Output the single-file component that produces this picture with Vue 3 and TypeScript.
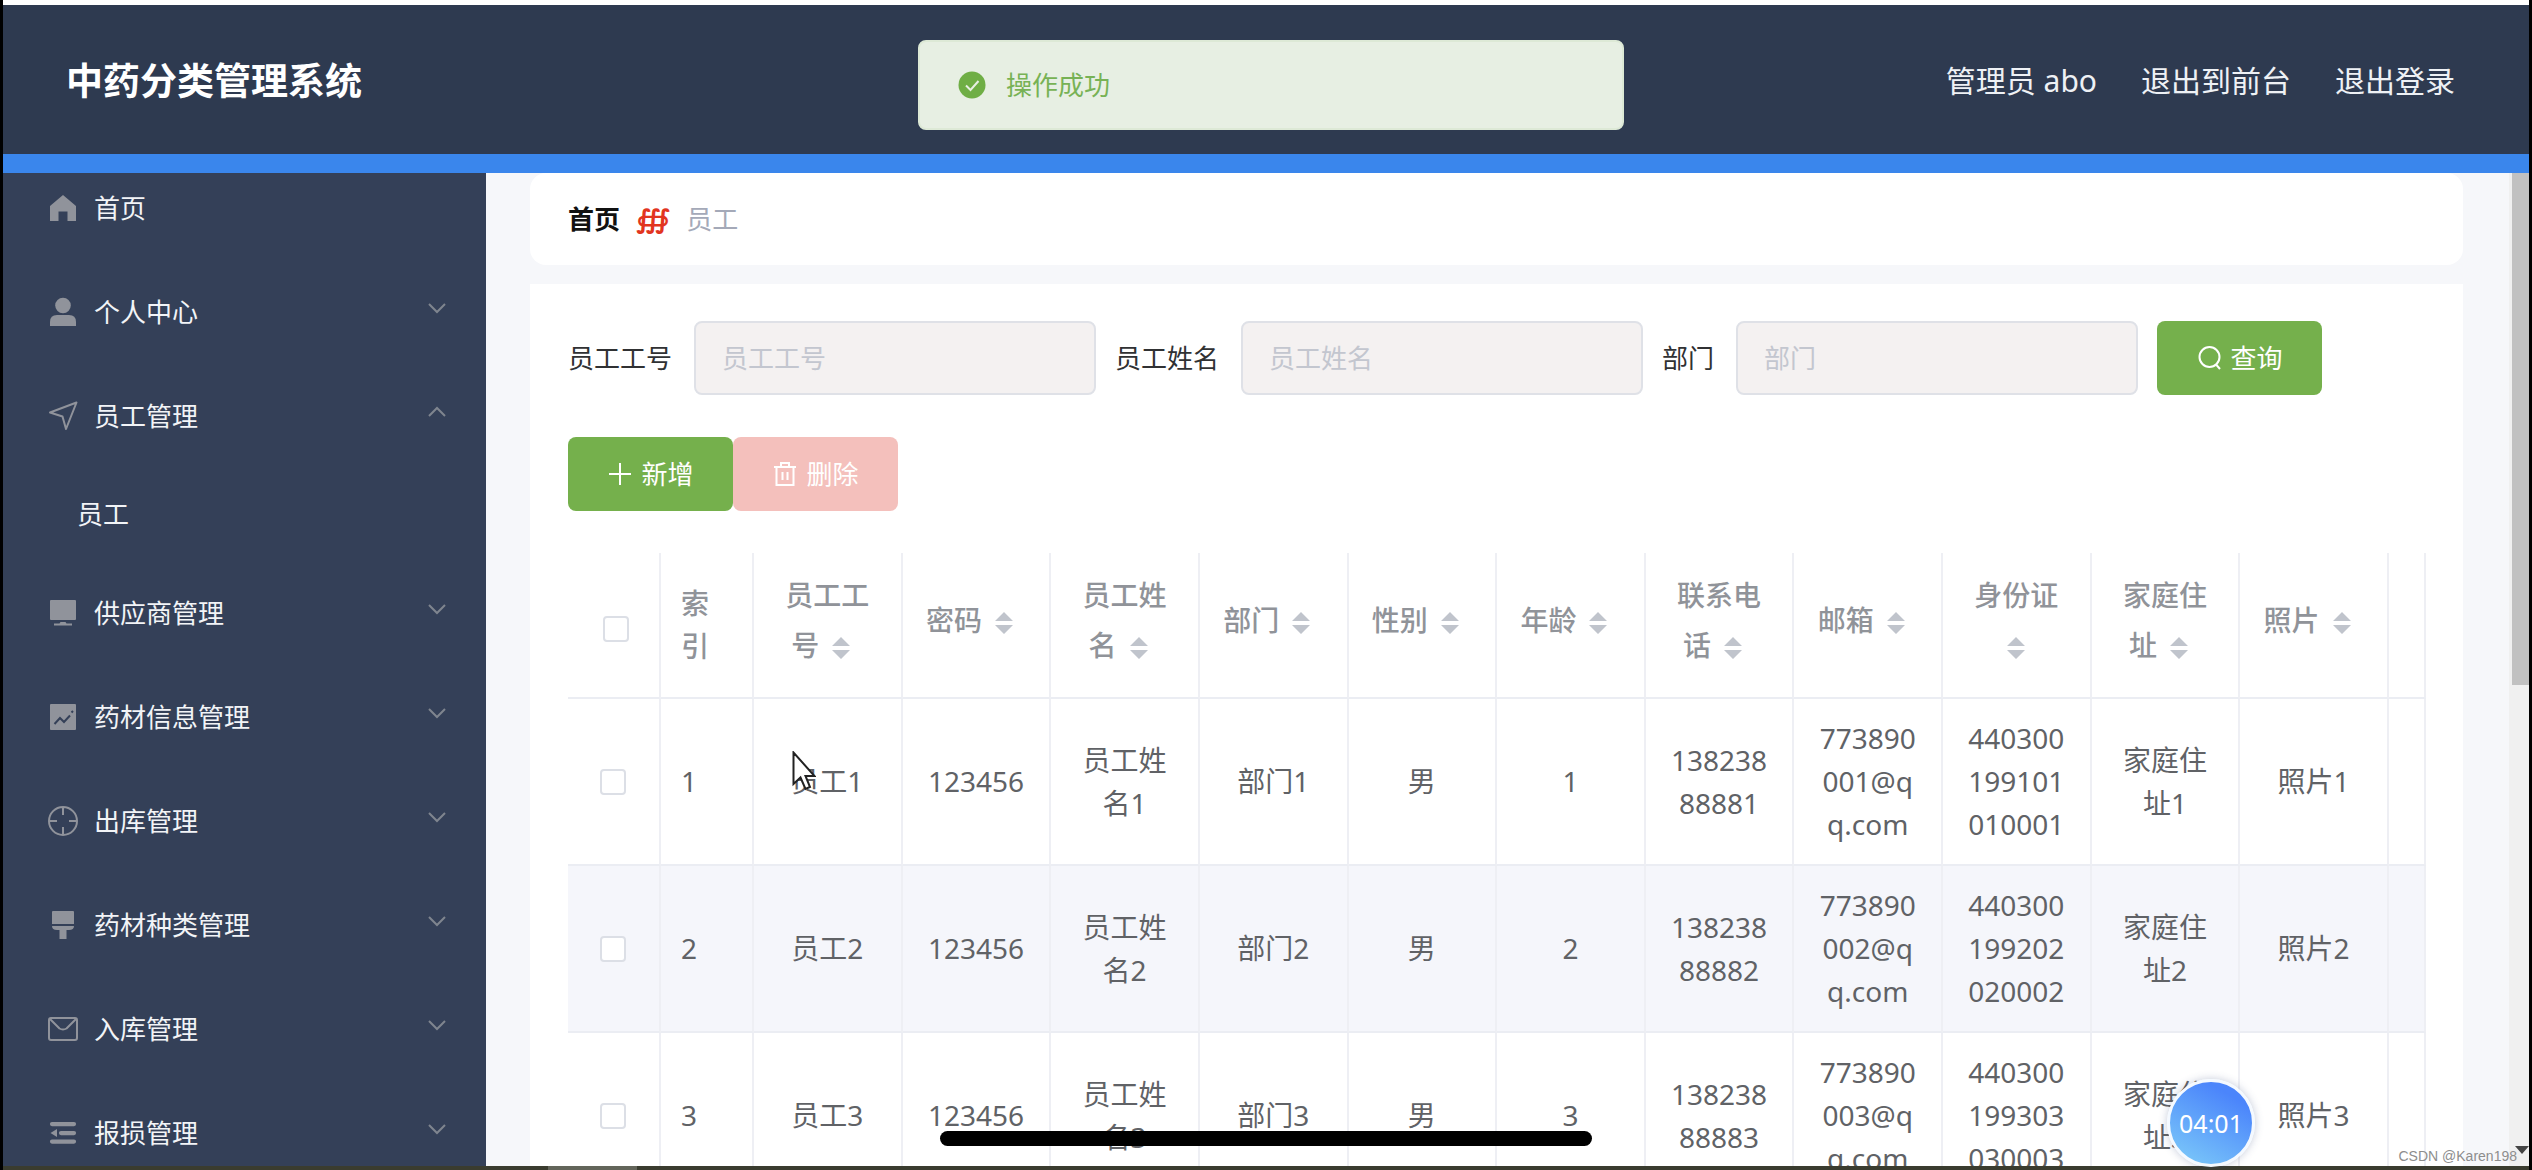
<script setup lang="ts">
interface MenuEntry {
  label: string
  icon: string
  open?: boolean
  children?: string[]
}

interface Column {
  key: string
  title: string
}

const menu: MenuEntry[] = [
  { label: '首页', icon: 'home' },
  { label: '个人中心', icon: 'user', children: [] },
  { label: '员工管理', icon: 'location', open: true, children: ['员工'] },
  { label: '供应商管理', icon: 'monitor', children: [] },
  { label: '药材信息管理', icon: 'chart', children: [] },
  { label: '出库管理', icon: 'aim', children: [] },
  { label: '药材种类管理', icon: 'brush', children: [] },
  { label: '入库管理', icon: 'message', children: [] },
  { label: '报损管理', icon: 'fold', children: [] },
]

const filters = [
  { id: 'gonghao', label: '员工工号' },
  { id: 'xingming', label: '员工姓名' },
  { id: 'bumen', label: '部门' },
]

const columns: Column[] = [
  { key: 'gonghao', title: '员工工号' },
  { key: 'mima', title: '密码' },
  { key: 'xingming', title: '员工姓名' },
  { key: 'bumen', title: '部门' },
  { key: 'xingbie', title: '性别' },
  { key: 'nianling', title: '年龄' },
  { key: 'dianhua', title: '联系电话' },
  { key: 'youxiang', title: '邮箱' },
  { key: 'shenfenzheng', title: '身份证' },
  { key: 'zhuzhi', title: '家庭住址' },
  { key: 'zhaopian', title: '照片' },
]

const idCards = ['440300199101010001', '440300199202020002', '440300199303030003']

const rows: Record<string, string>[] = idCards.map((card, i) => {
  const n = i + 1
  return {
    gonghao: `员工${n}`,
    mima: '123456',
    xingming: `员工姓名${n}`,
    bumen: `部门${n}`,
    xingbie: '男',
    nianling: `${n}`,
    dianhua: `1382388888${n}`,
    youxiang: `77389000${n}@qq.com`,
    shenfenzheng: card,
    zhuzhi: `家庭住址${n}`,
    zhaopian: `照片${n}`,
  }
})
</script>

<template>
  <div class="app">
    <header class="topbar">
      <h1>中药分类管理系统</h1>
      <nav class="account">
        <span>管理员 abo</span>
        <a href="#">退出到前台</a>
        <a href="#">退出登录</a>
      </nav>
    </header>

    <div class="body">
      <aside class="sidebar">
        <ul class="menu">
          <li v-for="item in menu" :key="item.label">
            <a href="#" class="entry">
              <svg class="icon" viewBox="0 0 30 30" aria-hidden="true">
                <path v-if="item.icon === 'home'" class="fill" d="M15 2 28 13V28H19.500V18.500H10.500V28H2V13Z" />
                <g v-else-if="item.icon === 'user'" class="fill">
                  <circle cx="15" cy="8.500" r="7.800" />
                  <path d="M2 29V25q0-7 7-7H21q7 0 7 7V29Z" />
                </g>
                <path v-else-if="item.icon === 'location'" class="line" d="M28.500 1.500 18 28 14.500 15.500 2 11.500Z" />
                <g v-else-if="item.icon === 'monitor'" class="fill">
                  <rect x="2" y="2" width="26" height="20" rx="1" />
                  <path d="M12.500 24h5l1 1.500H24V27.500H6V25.500H11.500Z" />
                </g>
                <g v-else-if="item.icon === 'chart'">
                  <rect class="fill" x="2" y="2" width="26" height="26" rx="1" />
                  <path class="cut" d="M6.500 22 12 16l4 4 6-6.500M23.500 10.500l1.500-1.500" />
                </g>
                <path
                  v-else-if="item.icon === 'aim'"
                  class="line"
                  d="M29 15a14 14 0 1 1-28 0 14 14 0 0 1 28 0ZM15 1v8M15 21v8M1 15h8M21 15h8"
                />
                <g v-else-if="item.icon === 'brush'" class="fill">
                  <path d="M5 1H25a1 1 0 0 1 1 1V14H4V2a1 1 0 0 1 1-1Z" />
                  <path d="M4 16H26q0 4-5 4H18.500V29H11.500V20H9q-5 0-5-4Z" />
                </g>
                <path
                  v-else-if="item.icon === 'message'"
                  class="line"
                  d="M3 4H27a2 2 0 0 1 2 2V24a2 2 0 0 1-2 2H3a2 2 0 0 1-2-2V6a2 2 0 0 1 2-2ZM2 5l9.500 9.500q3.500 2 7 0L28 5"
                />
                <path
                  v-else
                  class="fill"
                  d="M4 4H26a2 2 0 0 1 0 4.200H4A2 2 0 0 1 4 4ZM13 13H26a2 2 0 0 1 0 4.200H13A2 2 0 0 1 13 13ZM4 21.500H26a2 2 0 0 1 0 4.200H4a2 2 0 0 1 0-4.200ZM9 11V19L2.500 15Z"
                />
              </svg>
              <span class="label">{{ item.label }}</span>
              <svg v-if="item.children" class="arrow" viewBox="0 0 20 20" aria-hidden="true">
                <path :d="item.open ? 'M2 14 10 6l8 8' : 'M2 6l8 8 8-8'" />
              </svg>
            </a>
            <ul v-if="item.open" class="submenu">
              <li v-for="child in item.children" :key="child"><a href="#">{{ child }}</a></li>
            </ul>
          </li>
        </ul>
      </aside>

      <main class="content">
        <nav class="crumbs">
          <a href="#">首页</a>
          <span class="sep">∰</span>
          <span>员工</span>
        </nav>

        <section class="panel">
          <form class="filters" @submit.prevent>
            <div v-for="f in filters" :key="f.id" class="field">
              <label :for="f.id">{{ f.label }}</label>
              <input :id="f.id" type="text" :placeholder="f.label" />
            </div>
            <button type="submit" class="btn green">
              <svg viewBox="0 0 26 26" aria-hidden="true"><circle cx="12.500" cy="12" r="10" /><path d="M19 19.500l4 4.500" /></svg>
              查询
            </button>
          </form>

          <div class="actions">
            <button type="button" class="btn green">
              <svg viewBox="0 0 26 26" aria-hidden="true"><path d="M13 2V24M2 13H24" /></svg>
              新增
            </button>
            <button type="button" class="btn red" disabled>
              <svg viewBox="0 0 26 26" aria-hidden="true"><path d="M2 6H24M9 6V2H17V6M4.500 6V24H21.500V6M10.500 11V19M15.500 11V19" /></svg>
              删除
            </button>
          </div>

          <table>
            <colgroup>
              <col class="narrow" />
              <col class="narrow" />
              <col v-for="c in columns" :key="c.key" />
              <col class="rest" />
            </colgroup>
            <thead>
              <tr>
                <th class="pick"><input type="checkbox" aria-label="全选" /></th>
                <th class="index">索引</th>
                <th v-for="c in columns" :key="c.key" class="sortable">
                  {{ c.title }}<span class="caret"><svg viewBox="0 0 18 24" aria-hidden="true"><path d="M9 1l9 9H0ZM9 23l9-9H0Z" /></svg></span>
                </th>
                <th></th>
              </tr>
            </thead>
            <tbody>
              <tr v-for="(row, i) in rows" :key="i">
                <td class="pick"><input type="checkbox" :aria-label="row.gonghao" /></td>
                <td class="index">{{ i + 1 }}</td>
                <td v-for="c in columns" :key="c.key">{{ row[c.key] }}</td>
                <td></td>
              </tr>
            </tbody>
          </table>
        </section>
      </main>

      <div class="scrollbar">
        <div class="thumb"></div>
        <svg viewBox="0 0 14 8" aria-hidden="true"><path d="M0 0H14L7 8Z" /></svg>
      </div>
    </div>

    <div class="taskbar"><span></span></div>

    <div class="message" role="alert">
      <svg viewBox="0 0 28 28" aria-hidden="true">
        <circle cx="14" cy="14" r="13.500" />
        <path d="M8 14.500l4.500 4.500L20.500 10" />
      </svg>
      <p>操作成功</p>
    </div>

    <svg class="pointer" viewBox="0 0 24 40" aria-hidden="true">
      <path d="M1.500 1.500V33L8.500 26.500 13.500 38 18 36 13.500 25H22.500Z" />
    </svg>
    <div class="home-bar"></div>
    <div class="timer">04:01</div>
    <div class="watermark">CSDN @Karen198</div>
  </div>
</template>

<style>
body {
  margin: 0;
  background: #000;
}
</style>

<style scoped>
* {
  box-sizing: border-box;
}

.app {
  position: relative;
  display: flex;
  flex-direction: column;
  height: 100vh;
  padding: 0 3px;
  overflow: hidden;
  background: #000;
  font: 26px/40px "Noto Sans", "Noto Sans CJK SC", sans-serif;
  color: #303133;
}

a {
  color: inherit;
  text-decoration: none;
}

ul {
  margin: 0;
  padding: 0;
  list-style: none;
}

.topbar {
  display: flex;
  flex: none;
  align-items: center;
  justify-content: space-between;
  height: 173px;
  padding: 2px 74px 0 63px;
  border-top: 5px solid #fff;
  border-bottom: 19px solid #3a86ec;
  background: #2e3a50;
  color: #fff;
}

h1 {
  margin: 0;
  font-size: 37px;
  line-height: 48px;
}

.account {
  display: flex;
  gap: 44px;
  font-size: 30px;
  color: #eef1f5;
}

.body {
  display: flex;
  flex: 1;
  min-height: 0;
}

.sidebar {
  flex: none;
  width: 483px;
  overflow: hidden;
  background: #344058;
  color: #f2f4f7;
}

.menu {
  margin-top: -17px;
}

.entry {
  display: flex;
  align-items: center;
  height: 104px;
  padding: 0 39px 0 45px;
}

.icon {
  flex: none;
  width: 30px;
  height: 30px;
  margin-right: 16px;
}

.fill {
  fill: #90939b;
}

.line {
  fill: none;
  stroke: #90939b;
  stroke-width: 2;
  stroke-linejoin: round;
}

.cut {
  fill: none;
  stroke: #344058;
  stroke-width: 2;
}

.label {
  flex: 1;
}

.arrow {
  width: 20px;
  height: 20px;
  margin-bottom: 8px;
  fill: none;
  stroke: #7f858f;
  stroke-width: 2;
}

.submenu a {
  display: block;
  padding-left: 74px;
  line-height: 93px;
}

.content {
  display: flex;
  flex: 1;
  flex-direction: column;
  gap: 19px;
  min-width: 0;
  padding: 0 46px 0 44px;
  overflow: hidden;
  background: #f6f7fa;
}

.crumbs {
  display: flex;
  flex: none;
  align-items: center;
  gap: 16px;
  height: 92px;
  padding: 0 38px;
  border-radius: 16px;
  background: #fff;
  color: #a4a9b8;
}

.crumbs a {
  font-weight: 700;
  color: #111;
}

.sep {
  font-family: "DejaVu Serif", "DejaVu Sans", serif;
  font-weight: 700;
  color: #e2351f;
}

.panel {
  flex: 1 0 auto;
  padding: 37px 37px 37px 38px;
  background: #fff;
}

.filters {
  display: flex;
  gap: 19px;
}

.field {
  display: flex;
  align-items: center;
  gap: 22px;
}

.field input {
  width: 402px;
  height: 74px;
  padding: 0 26px;
  border: 2px solid #dfe1e7;
  border-radius: 8px;
  background: #f4f1f1;
  font: inherit;
  color: #606266;
}

.field input::placeholder {
  color: #c3c6cf;
  opacity: 1;
}

.btn {
  display: flex;
  align-items: center;
  justify-content: center;
  gap: 8px;
  width: 165px;
  height: 74px;
  padding: 0;
  border: 0;
  border-radius: 8px;
  font: inherit;
  color: #fff;
}

.btn svg {
  width: 26px;
  height: 26px;
  fill: none;
  stroke: #fff;
  stroke-width: 2;
}

.green {
  background: #75b04c;
}

.red {
  background: #f4c0bc;
}

.actions {
  display: flex;
  margin: 42px 0;
}

table {
  width: 100%;
  table-layout: fixed;
  border-spacing: 0;
  font-size: 28px;
  line-height: 43px;
  color: #606266;
}

.narrow {
  width: 93px;
}

.rest {
  width: 37px;
}

th,
td {
  height: 167px;
  padding: 0 20px;
  border-right: 2px solid #eeeff4;
  border-bottom: 2px solid #ebedf3;
  text-align: center;
  word-break: break-all;
}

th {
  height: 146px;
  font-weight: 500;
  color: #909399;
}

th.sortable {
  padding-bottom: 10px;
  line-height: 50px;
}

th.index,
td.index {
  text-align: left;
}

td.pick {
  padding: 0 0 0 32px;
}

th.pick {
  padding: 8px 0 0 35px;
}

tbody tr:nth-child(even) {
  background: #f5f6fb;
}

.pick input {
  display: block;
  width: 26px;
  height: 26px;
  margin: 0;
  border: 2px solid #dcdfe6;
  border-radius: 4px;
  background: #fff;
  appearance: none;
}

.caret {
  display: inline-flex;
  justify-content: center;
  width: 44px;
  vertical-align: middle;
}

.caret svg {
  width: 18px;
  height: 24px;
  fill: #c0c4cc;
}

.scrollbar {
  display: flex;
  flex: none;
  flex-direction: column;
  align-items: flex-end;
  justify-content: space-between;
  width: 20px;
  background: #f0f0f0;
}

.thumb {
  width: 17px;
  height: 51.6%;
  background: #c1c1c1;
}

.scrollbar svg {
  width: 14px;
  height: 8px;
  margin-bottom: 12px;
  fill: #444;
}

.taskbar {
  flex: none;
  height: 4px;
  padding-left: 545px;
  background: #3a3c2f;
}

.taskbar span {
  display: block;
  width: 89px;
  height: 4px;
  background: #63655a;
}

.message {
  position: absolute;
  top: 40px;
  left: calc(50% + 5px);
  display: flex;
  align-items: center;
  gap: 20px;
  width: 706px;
  height: 90px;
  padding: 0 38px;
  border: 2px solid #dde9d6;
  border-radius: 8px;
  background: #e7efe3;
  color: #77b255;
  transform: translateX(-50%);
}

.message svg {
  width: 28px;
  height: 28px;
  fill: #6fae45;
}

.message path {
  fill: none;
  stroke: #e7efe3;
  stroke-width: 2;
}

.message p {
  margin: 0;
}

.pointer {
  position: absolute;
  top: 751px;
  left: 792px;
  width: 24px;
  height: 40px;
  fill: #fff;
  stroke: #222;
  stroke-width: 2;
}

.home-bar {
  position: absolute;
  bottom: 24px;
  left: 50%;
  width: 652px;
  height: 15px;
  border-radius: 8px;
  background: #000;
  transform: translateX(-50%);
}

.timer {
  position: absolute;
  right: 277px;
  bottom: 3px;
  width: 88px;
  height: 88px;
  border: 3px solid #f4f9ff;
  border-radius: 50%;
  background: linear-gradient(30deg, #78c4f9 10%, #4b85fb 80%);
  box-shadow: 0 0 8px rgba(60, 80, 130, 0.3);
  font-size: 25px;
  line-height: 82px;
  text-align: center;
  color: #fff;
}

.watermark {
  position: absolute;
  right: 15px;
  bottom: 4px;
  font: 14px/20px "Liberation Sans", sans-serif;
  color: #8d8d8d;
}
</style>
